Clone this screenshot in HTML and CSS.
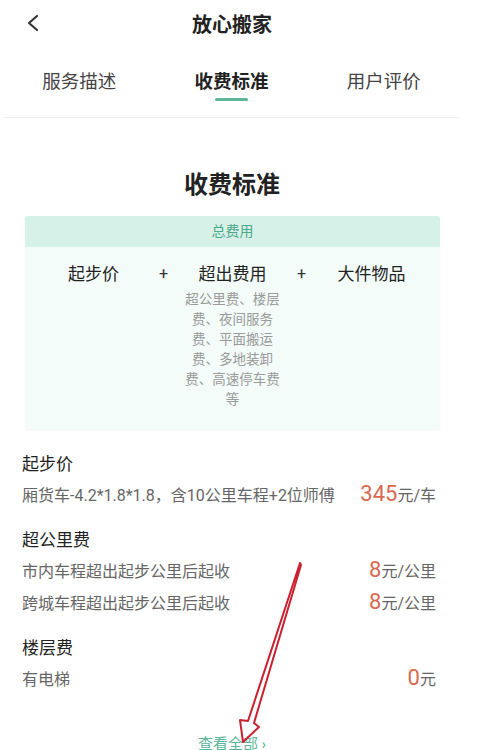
FILE: index.html
```html
<!DOCTYPE html>
<html lang="zh-CN">
<head>
  <meta charset="UTF-8">
  <meta name="viewport" content="width=device-width, initial-scale=1.0">
  <title>放心搬家</title>
  <link rel="stylesheet" href="styles.css">
</head>
<body>
  <div class="page">
    <!-- Header -->
    <header class="top-bar">
      <a class="back" href="#">
        <svg width="14" height="18" viewBox="0 0 14 18"><polyline points="11,2 3,9 11,16" fill="none" stroke="#333" stroke-width="2.2" stroke-linecap="round" stroke-linejoin="round"/></svg>
      </a>
      <h1>放心搬家</h1>
    </header>

    <!-- Tabs -->
    <nav class="tabs">
      <a href="#">服务描述</a>
      <a href="#" class="active">收费标准</a>
      <a href="#">用户评价</a>
    </nav>

    <main class="content">
      <h2 class="section-heading">收费标准</h2>

      <div class="total-box">
        <div class="total-head">总费用</div>
        <div class="total-body">
          <div class="part">起步价</div>
          <div class="plus">+</div>
          <div class="part part-mid">
            超出费用
            <p class="part-desc">超公里费、楼层费、夜间服务费、平面搬运费、多地装卸费、高速停车费等</p>
          </div>
          <div class="plus">+</div>
          <div class="part">大件物品</div>
        </div>
      </div>

      <section class="fee">
        <h3>起步价</h3>
        <div class="fee-row">
          <span>厢货车-4.2*1.8*1.8，含10公里车程+2位师傅</span>
          <span class="price"><b>345</b>元/车</span>
        </div>
      </section>

      <section class="fee">
        <h3>超公里费</h3>
        <div class="fee-row">
          <span>市内车程超出起步公里后起收</span>
          <span class="price"><b>8</b>元/公里</span>
        </div>
        <div class="fee-row">
          <span>跨城车程超出起步公里后起收</span>
          <span class="price"><b>8</b>元/公里</span>
        </div>
      </section>

      <section class="fee">
        <h3>楼层费</h3>
        <div class="fee-row">
          <span>有电梯</span>
          <span class="price"><b>0</b>元</span>
        </div>
      </section>

      <a class="see-all" href="#">查看全部 ›</a>
    </main>
  </div>

  <!-- annotation arrow -->
  <svg class="mark" width="478" height="750" viewBox="0 0 478 750">
    <path d="M300 563 L248 721 L240 720 L243 742 L259 727 L254 723 L301 565 Z" fill="none" stroke="#c9212e" stroke-width="2" stroke-linejoin="round"/>
  </svg>
</body>
</html>
```

FILE: styles.css
```css
/* Reset */
* {
  margin: 0;
  padding: 0;
  box-sizing: border-box;
}

body {
  font-family: Roboto, "Noto Sans CJK SC", "Noto Sans", sans-serif;
  background-color: #fff;
  color: #333;
  position: relative;
  height: 750px;
  overflow: hidden;
}

a {
  text-decoration: none;
  color: inherit;
}

.page {
  width: 464px;
}

/* Header */
.top-bar {
  position: relative;
  height: 46px;
  display: flex;
  align-items: center;
  justify-content: center;
}

.top-bar h1 {
  font-size: 20px;
  font-weight: bold;
  color: #222;
}

.back {
  position: absolute;
  left: 26px;
  top: 14px;
}

/* Tabs */
.tabs {
  display: grid;
  grid-template-columns: repeat(3, 1fr);
  height: 72px;
  padding-top: 24px;
  margin: 0 4px 0 3px;
  border-bottom: 1px solid #f1f2f2;
}

.tabs a {
  display: flex;
  flex-direction: column;
  align-items: center;
  font-size: 18.5px;
  line-height: 24px;
  color: #444;
}

.tabs a.active {
  font-weight: bold;
  color: #222;
}

.tabs a.active::after {
  content: "";
  width: 33px;
  height: 3px;
  margin-top: 4px;
  border-radius: 2px;
  background-color: #5fb799;
}

/* Content */
.content {
  padding: 0 28px 0 22px;
}

.section-heading {
  text-align: center;
  font-size: 24px;
  line-height: 32px;
  font-weight: bold;
  color: #222;
  margin: 51px 0 15px;
  padding-left: 6px;
}

/* Total box */
.total-box {
  margin: 0 -4px 0 3px;
  background-color: #f3fcf9;
  border-radius: 3px;
  box-shadow: 0 1px 2px rgba(0, 0, 0, 0.06);
}

.total-head {
  height: 31px;
  line-height: 31px;
  text-align: center;
  font-size: 14px;
  color: #4ea889;
  background-color: #d5f1e8;
  border-radius: 3px 3px 0 0;
}

.total-body {
  display: flex;
  justify-content: center;
  align-items: flex-start;
  gap: 5px;
  padding: 15px 0 20px;
}

.part {
  width: 100px;
  text-align: center;
  font-size: 17px;
  line-height: 24px;
  color: #222;
}

.part-mid {
  width: 98px;
}

.plus {
  width: 30px;
  text-align: center;
  font-size: 16px;
  line-height: 24px;
  color: #333;
}

.part-desc {
  margin-top: 3px;
  font-size: 13.5px;
  line-height: 20px;
  color: #9a9a9a;
}

/* Fee list */
.fee {
  margin-top: 18px;
}

.fee:first-of-type {
  margin-top: 23px;
}

.fee h3 {
  font-size: 17px;
  line-height: 24px;
  font-weight: normal;
  color: #222;
  margin-bottom: 2px;
}

.fee-row {
  display: flex;
  justify-content: space-between;
  align-items: baseline;
  height: 32px;
  line-height: 32px;
  font-size: 16px;
  color: #666;
}

.price b {
  font-weight: normal;
  font-size: 22px;
  color: #d8694f;
}

.see-all {
  display: block;
  margin-top: 38px;
  text-align: center;
  font-size: 15px;
  line-height: 24px;
  color: #5bb59a;
  padding-left: 6px;
}

/* Annotation */
.mark {
  position: absolute;
  left: 0;
  top: 0;
  pointer-events: none;
}
```
